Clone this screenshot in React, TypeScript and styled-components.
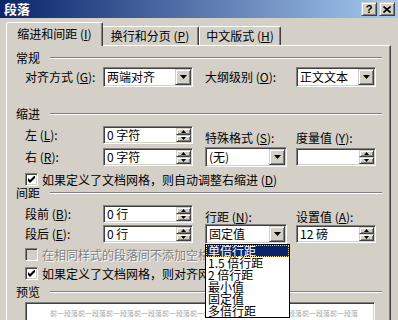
import React from 'react'
import styled, { createGlobalStyle, css } from 'styled-components'

const face = '#d4d0c8'
const shadow = '#808080'
const dark = '#404040'

const GlobalStyle = createGlobalStyle`
  * { box-sizing: border-box; }
  html, body { margin: 0; padding: 0; background: ${face}; }
  body {
    font-family: "Noto Sans CJK SC", "Liberation Sans", sans-serif;
    font-size: 12px;
    color: #000;
  }
`

const raised = css`
  border: 1px solid;
  border-color: ${face} ${dark} ${dark} ${face};
  box-shadow: inset 1px 1px #fff, inset -1px -1px ${shadow};
  background: ${face};
`

const sunken = css`
  border: 1px solid;
  border-color: ${shadow} #fff #fff ${shadow};
  box-shadow: inset 1px 1px ${dark}, inset -1px -1px ${face};
`

const Window = styled.div`
  width: 398px;
  height: 320px;
  overflow: hidden;
  background: ${face};
`

const TitleBar = styled.div`
  height: 18px;
  display: flex;
  align-items: center;
  padding: 0 3px 0 4px;
  background: linear-gradient(to right, #0a246a, #a6caf0);
`

const Title = styled.div`
  flex: 1;
  color: #fff;
  font-weight: bold;
  font-size: 13px;
  line-height: 14px;
`

const CaptionButton = styled.div`
  ${raised}
  width: 16px;
  height: 14px;
  display: flex;
  align-items: center;
  justify-content: center;
  font: bold 11px/1 "Liberation Sans", sans-serif;
  & + & { margin-left: 2px; }
`

const Body = styled.div`
  padding: 4px 0 0 6px;
`

const TabStrip = styled.div`
  display: flex;
  align-items: flex-end;
  height: 23px;
`

const Tab = styled.div<{ $active?: boolean; $w: number }>`
  position: relative;
  z-index: ${(p) => (p.$active ? 2 : 1)};
  width: ${(p) => p.$w}px;
  height: ${(p) => (p.$active ? 24 : 19)}px;
  margin-bottom: ${(p) => (p.$active ? -1 : 0)}px;
  margin-right: ${(p) => (p.$active ? -2 : 0)}px;
  padding-bottom: ${(p) => (p.$active ? 2 : 0)}px;
  background: ${face};
  border: 1px solid;
  border-color: #fff ${dark} transparent #fff;
  border-bottom: none;
  border-radius: 2px 2px 0 0;
  box-shadow: inset -1px 0 ${shadow};
  display: flex;
  align-items: center;
  justify-content: center;
  line-height: 12px;
  white-space: nowrap;
`

const Panel = styled.div`
  width: 385px;
  height: 300px;
  border: 1px solid;
  border-color: #fff ${dark} ${dark} #fff;
  box-shadow: inset -1px -1px ${shadow};
  padding: 6px 8px 0 9px;
`

const GroupHeader = styled.div<{ $mt?: number }>`
  display: flex;
  align-items: center;
  height: 12px;
  line-height: 12px;
  margin-top: ${(p) => p.$mt ?? 0}px;
`

const GroupLine = styled.div`
  flex: 1;
  height: 2px;
  margin-left: 10px;
  border-top: 1px solid ${shadow};
  border-bottom: 1px solid #fff;
`

const Row = styled.div<{ $mt?: number }>`
  display: grid;
  grid-template-columns: 78px 102px 91px 80px;
  align-items: center;
  height: 20px;
  margin-left: 9px;
  margin-top: ${(p) => p.$mt ?? 0}px;
`

const Label = styled.div<{ $low?: boolean }>`
  white-space: nowrap;
  line-height: 12px;
  align-self: ${(p) => (p.$low ? 'end' : 'center')};
  padding-bottom: ${(p) => (p.$low ? 1 : 0)}px;
`

const Combo = styled.div<{ $w: number }>`
  ${sunken}
  position: relative;
  width: ${(p) => p.$w}px;
  height: 20px;
  padding: 1px;
  background: #fff;
  display: flex;
`

const FieldText = styled.div`
  flex: 1;
  display: flex;
  align-items: center;
  padding-left: 2px;
  line-height: 12px;
  white-space: nowrap;
`

const DropButton = styled.div`
  ${raised}
  width: 16px;
  height: 16px;
  display: flex;
  align-items: center;
  justify-content: center;
`

const Spin = styled.div<{ $w: number }>`
  ${sunken}
  width: ${(p) => p.$w}px;
  height: 18px;
  padding: 1px;
  background: #fff;
  display: flex;
`

const SpinButtons = styled.div`
  width: 15px;
  display: flex;
  flex-direction: column;
`

const SpinButton = styled.div`
  ${raised}
  flex: 1;
  display: flex;
  align-items: center;
  justify-content: center;
`

const CheckRow = styled.div<{ $mt?: number; $disabled?: boolean }>`
  display: flex;
  align-items: center;
  height: 13px;
  margin-left: 9px;
  margin-top: ${(p) => p.$mt ?? 0}px;
  line-height: 12px;
  white-space: nowrap;
  color: ${(p) => (p.$disabled ? shadow : '#000')};
  text-shadow: ${(p) => (p.$disabled ? '1px 1px #fff' : 'none')};
`

const CheckBox = styled.div<{ $disabled?: boolean }>`
  ${sunken}
  width: 13px;
  height: 13px;
  margin-right: 4px;
  background: ${(p) => (p.$disabled ? face : '#fff')};
  display: flex;
  align-items: center;
  justify-content: center;
`

const DropList = styled.div`
  position: absolute;
  z-index: 10;
  top: calc(100% + 1px);
  left: -1px;
  width: 85px;
  background: #fff;
  border: 1px solid #000;
`

const DropItem = styled.div<{ $selected?: boolean }>`
  height: 12px;
  line-height: 12px;
  padding-left: 2px;
  white-space: nowrap;
  background: ${(p) => (p.$selected ? '#0a246a' : '#fff')};
  color: ${(p) => (p.$selected ? '#fff' : '#000')};
  outline: ${(p) => (p.$selected ? '1px dotted #f0d890' : 'none')};
  outline-offset: -1px;
`

const Preview = styled.div`
  ${sunken}
  width: 350px;
  height: 40px;
  margin: 4px 0 0 9px;
  background: #fff;
  padding: 6px 0 0 24px;
  overflow: hidden;
`

const PreviewLine = styled.div`
  font-size: 7px;
  line-height: 8px;
  color: #a8a8a8;
  white-space: nowrap;
`

const Key = styled.u`
  text-underline-offset: 1px;
`

const ArrowDown = () => (
  <svg width="7" height="4" viewBox="0 0 7 4">
    <polygon points="0,0 7,0 3.5,4" fill="#000" />
  </svg>
)

const SmallArrow = ({ up }: { up?: boolean }) => (
  <svg width="5" height="3" viewBox="0 0 5 3">
    <polygon points={up ? '2.5,0 5,3 0,3' : '0,0 5,0 2.5,3'} fill="#000" />
  </svg>
)

const CheckMark = () => (
  <svg width="7" height="7" viewBox="0 0 7 7">
    <polygon points="0,2 2,4 7,-1 7,2 2,7 0,5" fill="#000" />
  </svg>
)

function ComboBox({ w, value, children }: { w: number; value: string; children?: React.ReactNode }) {
  return (
    <Combo $w={w}>
      <FieldText>{value}</FieldText>
      <DropButton>
        <ArrowDown />
      </DropButton>
      {children}
    </Combo>
  )
}

function SpinBox({ w, value }: { w: number; value: string }) {
  return (
    <Spin $w={w}>
      <FieldText>{value}</FieldText>
      <SpinButtons>
        <SpinButton>
          <SmallArrow up />
        </SpinButton>
        <SpinButton>
          <SmallArrow />
        </SpinButton>
      </SpinButtons>
    </Spin>
  )
}

function Check({ mt, checked, disabled, children }: { mt: number; checked?: boolean; disabled?: boolean; children: React.ReactNode }) {
  return (
    <CheckRow $mt={mt} $disabled={disabled}>
      <CheckBox $disabled={disabled}>{checked && <CheckMark />}</CheckBox>
      <span>{children}</span>
    </CheckRow>
  )
}

const lineSpacing = ['单倍行距', '1.5 倍行距', '2 倍行距', '最小值', '固定值', '多倍行距']

export default function App() {
  return (
    <>
      <GlobalStyle />
      <Window>
        <TitleBar>
          <Title>段落</Title>
          <CaptionButton>?</CaptionButton>
          <CaptionButton>
            <svg width="8" height="7" viewBox="0 0 8 7">
              <path d="M0.5 0.5 L7.5 6.5 M7.5 0.5 L0.5 6.5" stroke="#000" strokeWidth="1.6" />
            </svg>
          </CaptionButton>
        </TitleBar>
        <Body>
          <TabStrip>
            <Tab $active $w={97}>
              缩进和间距 (<Key>I</Key>)
            </Tab>
            <Tab $w={98}>
              换行和分页 (<Key>P</Key>)
            </Tab>
            <Tab $w={82}>
              中文版式 (<Key>H</Key>)
            </Tab>
          </TabStrip>
          <Panel>
            <GroupHeader>
              常规
              <GroupLine />
            </GroupHeader>
            <Row $mt={3}>
              <Label>
                对齐方式 (<Key>G</Key>):
              </Label>
              <ComboBox w={90} value="两端对齐" />
              <Label>
                大纲级别 (<Key>O</Key>):
              </Label>
              <ComboBox w={80} value="正文文本" />
            </Row>

            <GroupHeader $mt={21}>
              缩进
              <GroupLine />
            </GroupHeader>
            <Row $mt={5}>
              <Label>
                左 (<Key>L</Key>):
              </Label>
              <SpinBox w={90} value="0 字符" />
              <Label $low>
                特殊格式 (<Key>S</Key>):
              </Label>
              <Label $low>
                度量值 (<Key>Y</Key>):
              </Label>
            </Row>
            <Row $mt={2}>
              <Label>
                右 (<Key>R</Key>):
              </Label>
              <SpinBox w={90} value="0 字符" />
              <ComboBox w={82} value="(无)" />
              <SpinBox w={80} value="" />
            </Row>
            <Check mt={6} checked>
              如果定义了文档网格，则自动调整右缩进 (<Key>D</Key>)
            </Check>

            <GroupHeader $mt={1}>
              间距
              <GroupLine />
            </GroupHeader>
            <Row $mt={5}>
              <Label>
                段前 (<Key>B</Key>):
              </Label>
              <SpinBox w={90} value="0 行" />
              <Label $low>
                行距 (<Key>N</Key>):
              </Label>
              <Label $low>
                设置值 (<Key>A</Key>):
              </Label>
            </Row>
            <Row>
              <Label>
                段后 (<Key>E</Key>):
              </Label>
              <SpinBox w={90} value="0 行" />
              <ComboBox w={82} value="固定值">
                <DropList>
                  {lineSpacing.map((item, i) => (
                    <DropItem key={item} $selected={i === 0}>
                      {item}
                    </DropItem>
                  ))}
                </DropList>
              </ComboBox>
              <SpinBox w={80} value="12 磅" />
            </Row>
            <Check mt={4} disabled>
              在相同样式的段落间不添加空格 (<Key>C</Key>)
            </Check>
            <Check mt={6} checked>
              如果定义了文档网格，则对齐网格 (<Key>W</Key>)
            </Check>

            <GroupHeader $mt={6}>
              预览
              <GroupLine />
            </GroupHeader>
            <Preview>
              <PreviewLine>前一段落前一段落前一段落前一段落前一段落前一段落前一段落前一段落前一段落前一段落前一段落</PreviewLine>
            </Preview>
          </Panel>
        </Body>
      </Window>
    </>
  )
}
